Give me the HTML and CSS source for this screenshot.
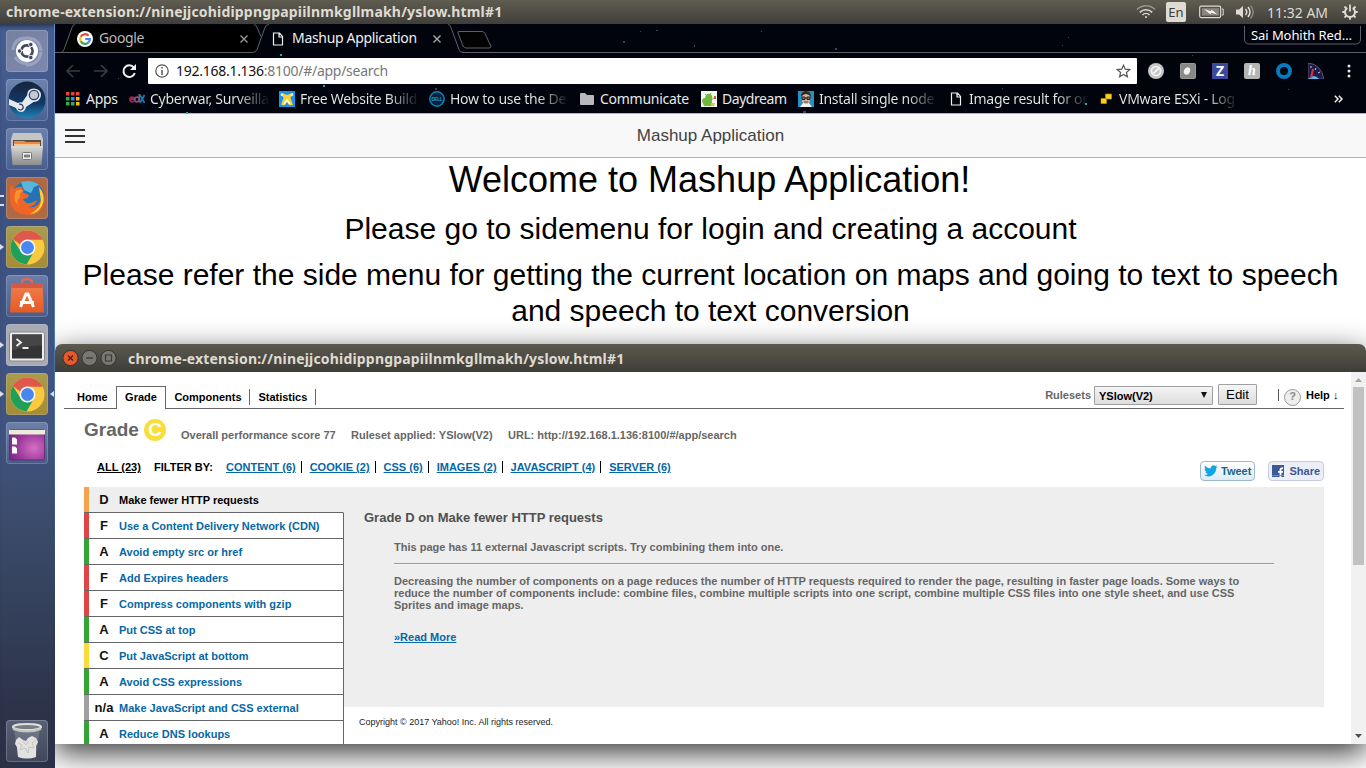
FILE: index.html
```html
<!DOCTYPE html>
<html lang="en">
<head>
<meta charset="utf-8">
<title>Mashup Application</title>
<link rel="stylesheet" href="styles.css">
</head>
<body>
<svg width="0" height="0" class="defs">
  <defs>
    <linearGradient id="steam" x1="0" y1="0" x2="0" y2="1"><stop offset="0" stop-color="#17243d"/><stop offset=".6" stop-color="#123a68"/><stop offset="1" stop-color="#1f86b8"/></linearGradient>
    <linearGradient id="metal" x1="0" y1="0" x2="0" y2="1"><stop offset="0" stop-color="#d8d8d6"/><stop offset="1" stop-color="#8d8d8b"/></linearGradient>
    <linearGradient id="bag" x1="0" y1="0" x2="0" y2="1"><stop offset="0" stop-color="#f0804f"/><stop offset="1" stop-color="#e65a22"/></linearGradient>
    <radialGradient id="purple" cx=".7" cy=".6" r=".8"><stop offset="0" stop-color="#d66fc4"/><stop offset=".6" stop-color="#9b3a9c"/><stop offset="1" stop-color="#74287d"/></radialGradient>
    <symbol id="page" viewBox="0 0 12 14"><path d="M1.5 1h6l3 3.4V13h-9zM7 1v4h3.5" fill="none" stroke="#f2f2f2" stroke-width="1.2"/></symbol>
    <symbol id="chrome" viewBox="0 0 36 36">
      <circle cx="18" cy="18" r="17.5" fill="#fbc93d"/>
      <path d="M2.8 9.3A17.5 17.5 0 0 1 33.6 10H18a8 8 0 0 0-7.4 5z" fill="#e0584b"/>
      <path d="M2.9 9.2A17.5 17.5 0 0 0 17 35.5l7.8-13.4A8 8 0 0 1 11 22z" fill="#1ea05b"/>
      <circle cx="18" cy="18" r="8.2" fill="#f4f4f4"/><circle cx="18" cy="18" r="6.6" fill="#4a86f0"/>
    </symbol>
  </defs>
</svg>

<header class="panel">
  <span class="panel-title ui">chrome-extension://ninejjcohidippngpapiilnmkgllmakh/yslow.html#1</span>
  <div class="indicators">
    <svg class="wifi" width="20" height="14" viewBox="0 0 20 14" fill="none" stroke="#dfdbd2" stroke-width="1.5"><path d="M1 4.6a12.6 12.6 0 0 1 18 0" stroke="#98948c"/><path d="M3.8 7.4a8.8 8.8 0 0 1 12.4 0M6.5 10a5 5 0 0 1 7 0"/><circle cx="10" cy="12" r="1" fill="#dfdbd2" stroke="none"/></svg>
    <span class="lang ui">En</span>
    <svg class="battery" width="25" height="14" viewBox="0 0 25 14"><rect x=".7" y="1.2" width="21" height="11.4" rx="1.5" fill="none" stroke="#dfdbd2" stroke-width="1.2"/><path d="M23 4h1.2v6H23" fill="none" stroke="#dfdbd2"/><path d="M3 3.2h17v7.4H3z" fill="#8a867e"/><path d="M5 4l7 2.200.5-1.800 6 5.200-6.500-1.800-.5 1.800z" fill="#f3f0ea"/></svg>
    <svg class="sound" width="20" height="16" viewBox="0 0 20 16"><path d="M1 5.500h3L8 2v12L4 10.500H1z" fill="#dfdbd2"/><path d="M10.500 5q2.500 3 0 6M13 3q4 5 0 10" fill="none" stroke="#dfdbd2" stroke-width="1.500"/><path d="M15.500 1.500q5.500 6.500 0 13" fill="none" stroke="#8a867e" stroke-width="1.500"/></svg>
    <span class="clock ui">11:32 AM</span>
    <svg width="16" height="16" viewBox="0 0 16 16" fill="none" stroke="#dfdbd2"><path d="M5.300 3.900a5 5 0 1 0 5.400 0" stroke-width="2"/><path d="M8 .5v7" stroke-width="1.800"/><path d="M.3 8h2.500M13.200 8h2.500M8 13v2.700M2.500 2.500l1.800 1.800M13.500 2.500l-1.800 1.800M2.500 13.500l1.800-1.800M13.500 13.500l-1.800-1.800" stroke-width="1.800"/></svg>
  </div>
</header>

<div class="desktop">
  <nav class="launcher">
    <div class="tile dash"><svg width="42" height="42" viewBox="0 0 42 42"><g fill="none" stroke="#b3bbd2" stroke-width="3" opacity=".55"><path d="M7 20Q8 7 22 8q12 1 13 13M35 22q-2 13-15 13"/><path d="M9 27q5 8 14 6"/></g><circle cx="21" cy="21" r="11" fill="#fff"/><circle cx="21" cy="21" r="5.600" fill="none" stroke="#414861" stroke-width="2.600" stroke-dasharray="10.300 1.400" stroke-dashoffset="5"/><g fill="#414861" stroke="#fff" stroke-width=".8"><circle cx="13.500" cy="21" r="2.200"/><circle cx="24.800" cy="14.500" r="2.200"/><circle cx="24.800" cy="27.500" r="2.200"/></g></svg></div>
    <div class="tile"><svg width="42" height="42" viewBox="0 0 42 42"><circle cx="21" cy="21" r="18.500" fill="url(#steam)"/><path d="M3 20l9 4q2-1 4-.5l5-7q0-7 7-7 7 .5 7 7-1 6-7.500 6.500L20 28q-1 5-5 5-4-.5-5-4l-7-3z" fill="#e6e9ee"/><circle cx="28" cy="16" r="4.700" fill="#c3cad5" stroke="#304563" stroke-width="1.300"/><path d="M13 25.200q3-.5 4 2t-2 3.800l-3-1" fill="none" stroke="#304563" stroke-width="1.200"/></svg></div>
    <div class="tile"><svg width="42" height="42" viewBox="0 0 42 42"><path d="M7 5h28l2 6v9H5v-9z" fill="#c5c5c3"/><path d="M7 12h28v8H7z" fill="#55504b"/><path d="M8 13h10l2 1h14v6H8z" fill="#ee8b43"/><path d="M8 16h26v2H8z" fill="#f6c491"/><path d="M5 18h32l-1.500 19h-29z" fill="url(#metal)"/><rect x="16.500" y="24.500" width="9" height="7" rx="1" fill="#eee" stroke="#777"/><path d="M18.500 27h5v2h-5z" fill="#999" stroke="#555" stroke-width=".7"/></svg></div>
    <div class="tile orange open2"><svg width="42" height="42" viewBox="0 0 42 42"><circle cx="22" cy="20" r="16" fill="#2473b5"/><path d="M15 5q11-3 18 3l-5 2-3 6-7-3z" fill="#58b7df"/><path d="M5 8q2 2 3 4 5-4 9-1-2 3 1 5l5 2q-1 4-6 4 2 5 8 4l6-3q-2 7-9 7 10 2 13-8 1-7-2-11 7 6 5 15-3 12-16 12Q5 37 4 22 3 14 5 8z" fill="#ef6526"/><path d="M33 10q6 7 4 16-3 10-13 11 10-5 11-13z" fill="#fbd33a"/><path d="M10 14q5-3 8 0-5 1-4 6-4 3-2 8-6-5-2-14z" fill="#f89233"/></svg></div>
    <div class="tile gold open"><svg width="35" height="35"><use href="#chrome"/></svg></div>
    <div class="tile"><svg width="42" height="42" viewBox="0 0 42 42"><path d="M16 10V7q0-3 5-3t5 3v3" fill="none" stroke="#d66b58" stroke-width="2.500"/><path d="M5.500 8h31l1.500 29.500H4z" fill="url(#bag)"/><path d="M5.500 8h31v5h-31z" fill="#d65742"/><g fill="none" stroke="#fff" stroke-width="3"><path d="M14.500 32l5.500-13h2l5.500 13M14 27.500h14"/></g></svg></div>
    <div class="tile grey open"><svg width="42" height="42" viewBox="0 0 42 42"><rect x="3.500" y="8" width="35" height="29" rx="2" fill="#eee" stroke="#888"/><rect x="6" y="10.500" width="30" height="24" fill="#343434"/><path d="M6 10.500h30v11q-14 0-30 5z" fill="#464646"/><path d="M10.500 15l4.500 3.500-4.500 3.500M16.500 24h6" fill="none" stroke="#eee" stroke-width="1.800"/></svg></div>
    <div class="tile gold open active"><svg width="35" height="35"><use href="#chrome"/></svg></div>
    <div class="tile"><svg width="42" height="42" viewBox="0 0 42 42"><rect x="3.500" y="8" width="35" height="30" rx="1.500" fill="url(#purple)" stroke="#5a2462" stroke-width=".7"/><path d="M3 8h36v4.500H3z" fill="#eeeadb"/><path d="M6 15.500h3l2 2v5H6zM6 24.500h3l2 2v5H6z" fill="#fff"/></svg></div>
    <div class="tile trash"><svg width="42" height="42" viewBox="0 0 42 42"><path d="M8 8l4 29q9 3 18 0l4-29z" fill="#a9afb8" opacity=".3"/><path d="M10 20l3-3 4 3 3 1 2-3 4-2 4 2 2 4-2 4 0 11q-9 3-18 0l-1-10-2-3z" fill="#e2e3e1"/><path d="M12 23l4 2-2 5 5-2 3 5 1-6 5 1-2-5 4-3M17 21l3 4 3-4" fill="none" stroke="#c2c4c1"/><ellipse cx="21" cy="7" rx="14" ry="3" fill="#777d85" stroke="#dfe0dc" stroke-width="2"/><path d="M7 9q14 5 28 0" fill="none" stroke="#c2c4c0" stroke-width="2"/></svg></div>
  </nav>

  <main class="browser">
    <section class="chrome-top">
      <svg class="sky" width="1311" height="90" viewBox="55 24 1311 90">
        <path d="M62 52l11-27h180l5 12-4 15z" fill="#000"/>
        <g fill="none" stroke="#5d6065"><path d="M55 52.500h6q2 0 3-3l8-22q1-3 3-3M254 24.500q2 0 3 3l4 9M55 52.500h197q4 0 5-3l8-22q1-3 4-3M448 24.500q2 0 3 3l8 22q1 3 4 3h903"/><path d="M459 31.500h23q2 0 3 2l6 13q0 1.500-2 1.500h-23q-2 0-3-2l-5-13q-.5-1.500 1-1.500z" fill="#030303"/><path d="M1244.500 26v13q0 5 5 5h106q5 0 5-5V26"/></g>
        <g fill="#56838c"><path d="M280 54h2v2h-2zM323 85h2v2h-2zM186 112h2v2h-2zM1085 103h2v2h-2z" fill="#2ba6ac"/><path d="M623 41h2v2h-2zM694 45h1v2h-1zM835 48h2v2h-2zM640 31h1v1h-1zM656 30h2v1h-2zM761 31h1v1h-1zM253 71h1v1h-1zM435 88h2v2h-2zM803 111h3v2h-3zM1068 37h1v1h-1zM1062 45h1v1h-1zM1288 89h1v1h-1zM118 78h1v1h-1zM1192 55h1v1h-1zM1002 88h1v1h-1z" opacity=".55"/></g>
      </svg>
      <div class="tabs ui">
        <div class="tab tab-a">
          <svg width="16" height="16" viewBox="0 0 16 16"><circle cx="8" cy="8" r="8" fill="#fff"/><g fill="none" stroke-width="2.200"><path d="M11.600 4.700A4.900 4.900 0 0 0 3.700 5.800" stroke="#ea4335"/><path d="M3.700 5.800a4.900 4.900 0 0 0 0 4.500" stroke="#fbbc05"/><path d="M3.700 10.300a4.900 4.900 0 0 0 7.800 1.200" stroke="#34a853"/><path d="M8.200 8h4.700q0 2-1.400 3.500" stroke="#4285f4"/></g></svg>
          <span class="tab-name t-google">Google</span>
          <svg class="close" width="8" height="8" viewBox="0 0 8 8"><path d="M.5.5l7 7M7.500.5l-7 7" stroke="#96979a" stroke-width="1.400"/></svg>
        </div>
        <div class="tab tab-b">
          <svg width="12" height="14"><use href="#page"/></svg>
          <span class="tab-name t-mashup">Mashup Application</span>
          <svg class="close" width="8" height="8" viewBox="0 0 8 8"><path d="M.5.5l7 7M7.500.5l-7 7" stroke="#aaa" stroke-width="1.400"/></svg>
        </div>
        <span class="profile">Sai Mohith Red…</span>
      </div>
      <div class="toolbar">
        <svg class="nav-icons" width="86" height="26" viewBox="0 0 86 26" fill="none"><g stroke="#393b41" stroke-width="1.700"><path d="M18 13H5.500M11 7l-6 6 6 6M32 13h12.500M39 7l6 6-6 6"/></g><path d="M71.800 9.500A5.800 5.800 0 1 0 72.800 15" stroke="#f2f2f2" stroke-width="2"/><path d="M74 6v6h-6z" fill="#f2f2f2"/></svg>
        <div class="omnibox ui">
          <svg width="14" height="14" viewBox="0 0 14 14"><circle cx="7" cy="7" r="6.200" fill="none" stroke="#555" stroke-width="1.200"/><path d="M7 6v5M7 3v1.600" stroke="#555" stroke-width="1.500"/></svg>
          <span class="url">192.168.1.136<i>:8100/#/app/search</i></span>
          <svg class="star" width="15" height="14" viewBox="0 0 15 14"><path d="M7.500 1.200l1.800 4 4.400.4-3.300 2.900 1 4.300-3.900-2.300-3.900 2.300 1-4.300L1.300 5.600l4.400-.4z" fill="none" stroke="#555" stroke-width="1.200"/></svg>
        </div>
        <div class="extensions">
          <svg width="16" height="16"><circle cx="8" cy="8" r="8" fill="#c6c6c6"/><circle cx="8" cy="8" r="4.500" fill="none" stroke="#f5f5f5" stroke-width="1.600"/><path d="M5.500 10.500l5-5" stroke="#fff" stroke-width="1.600"/></svg>
          <svg width="16" height="16"><rect width="16" height="16" rx="2" fill="#9a9a9a"/><path d="M1 1h14v14H1z" fill="#888"/><ellipse cx="7" cy="8" rx="3" ry="3.800" fill="#f2f2f2" transform="rotate(25 7 8)"/></svg>
          <span class="ext-z">Z</span>
          <span class="ext-h">h</span>
          <svg width="16" height="16"><circle cx="8" cy="8" r="6" fill="#02060d" stroke="#087bc0" stroke-width="4"/></svg>
          <svg width="16" height="16" viewBox="0 0 16 16"><path d="M0 0q13 1 16 16H0z" fill="#1d1b4c" stroke="#777" stroke-width=".7"/><path d="M0 16q6-6 11 0z" fill="#5ab6ec"/><path d="M3 15L5 6" stroke="#ee2d3a" stroke-width="2"/><path d="M3 3v2M8 5L7 7M12 9l-2 1" stroke="#ccc"/></svg>
          <svg width="4" height="14" fill="#e5e5e5"><circle cx="2" cy="2" r="1.500"/><circle cx="2" cy="7" r="1.500"/><circle cx="2" cy="12" r="1.500"/></svg>
        </div>
      </div>
      <div class="bookmarks ui">
        <div class="bm w64"><svg width="16" height="16"><g fill="#ea4335"><path d="M1 1h3.500v3.500H1zM6 1h3.500v3.500H6zM11 1h3.500v3.500H11z"/></g><path d="M1 6h3.500v3.500H1zM1 11h3.500v3.500H1zM6 11h3.500v3.500H6z" fill="#34a853"/><path d="M6 6h3.500v3.500H6z" fill="#4285f4"/><path d="M11 6h3.500v3.500H11zM11 11h3.500v3.500H11z" fill="#fbbc05"/></svg><span>Apps</span></div>
        <div class="bm fade"><svg width="16" height="16" fill="none" stroke-width="1.800"><path d="M1 8h4.500A2.300 2.300 0 1 0 5 10" stroke="#a81f58"/><circle cx="8" cy="8.500" r="2.300" stroke="#8d4a77"/><path d="M10.300 3v8" stroke="#7d5a72"/><path d="M11 4l4.500 8M15.500 4L11 12" stroke="#1479b5"/></svg><span>Cyberwar, Surveilla</span></div>
        <div class="bm fade"><svg width="16" height="16"><path d="M0 0h16v16H0z" fill="#1593f5"/><path d="M2 3l5 3M14 3L9 6M4 14l4-6 4 6" stroke="#fff" stroke-width="2.200" fill="none"/><path d="M3 2l5 2 5-2-1.500 5L14 14H10l-2-3-2 3H2l2.500-7z" fill="#fdd12b"/><path d="M5 13l3-4 3 4" stroke="#fff" stroke-width="1.500" fill="none"/></svg><span>Free Website Build</span></div>
        <div class="bm fade"><svg width="16" height="16"><circle cx="8" cy="8" r="7.200" fill="#06203c" stroke="#0d83bb" stroke-width="1.500"/><text x="2.600" y="10.300" font-family="Liberation Sans" font-weight="bold" font-size="5" fill="#1793cd" textLength="11">DELL</text></svg><span>How to use the De</span></div>
        <div class="bm w122"><svg width="16" height="16"><path d="M1 3q0-1 1-1h4l2 2h6q1 0 1 1v8q0 1-1 1H2q-1 0-1-1z" fill="#b9b9bb"/></svg><span>Communicate</span></div>
        <div class="bm w97"><svg width="16" height="16"><path d="M0 0h16v16H0z" fill="#f4f7ee"/><path d="M3 15L1 10q0-3 3-3 1-5 5-4 3 1 2 5v7z" fill="#6fb93c"/><path d="M4 3l2 2M10 2L9 4M10 9l3-2" stroke="#6fb93c"/><path d="M10 12h4l-1 3h-3z" fill="#efbd35"/><path d="M13 5h2v3h-2z" fill="#d5533e"/></svg><span class="dream">Daydream</span></div>
        <div class="bm fade"><svg width="16" height="16"><path d="M0 0h16v16H0z" fill="#2492c4"/><path d="M2 16l3-4h6l3 4z" fill="#f3f3f3"/><ellipse cx="8" cy="7.500" rx="4.300" ry="5.500" fill="#e0b095"/><path d="M3 6q0-6 5-6t5 6q-2-3-5-3T3 6z" fill="#33251f"/><path d="M4 6h3v2.500H4zM9 6h3v2.500H9zM7 7h2" fill="#777" stroke="#222"/><path d="M6 11h4" stroke="#703d2c"/></svg><span>Install single node</span></div>
        <div class="bm fade"><svg width="16" height="14"><use href="#page" x="2" width="12" height="14"/></svg><span>Image result for or</span></div>
        <div class="bm fade"><svg width="16" height="16"><path d="M7.500 3h6v5h-6zM3 7.500h5.500v5H3z" fill="#f7d21c" stroke="#ba8e16" stroke-width=".6"/></svg><span>VMware ESXi - Log</span></div>
        <svg class="more" width="9" height="8" viewBox="0 0 9 8"><path d="M.8.800L4 4 .800 7.200M4.800.800L8 4 4.800 7.200" fill="none" stroke="#eee" stroke-width="1.500"/></svg>
      </div>
    </section>

    <section class="app">
      <div class="app-bar"><span class="burger"></span><span class="app-name">Mashup Application</span></div>
      <h1>Welcome to Mashup Application!</h1>
      <h2>Please go to sidemenu for login and creating a account</h2>
      <h2>Please refer the side menu for getting the current location on maps and going to text to speech and speech to text conversion</h2>
    </section>
  </main>

  <div class="window">
    <div class="titlebar">
      <svg width="56" height="18" viewBox="0 0 56 18"><circle cx="9.500" cy="9" r="7.600" fill="#e9572b" stroke="#35332f"/><path d="M7 6.500l5 5M12 6.500l-5 5" stroke="#512214" stroke-width="1.300"/><circle cx="28.500" cy="9" r="7.600" fill="#787770" stroke="#35332f"/><path d="M25 9h7" stroke="#3c3b37" stroke-width="1.300"/><circle cx="47.500" cy="9" r="7.600" fill="#787770" stroke="#35332f"/><path d="M44.500 6h6v6h-6z" fill="none" stroke="#3c3b37" stroke-width="1.200"/></svg>
      <span class="window-title ui">chrome-extension://ninejjcohidippngpapiilnmkgllmakh/yslow.html#1</span>
    </div>
    <div class="window-body">
      <div class="yslow">
        <div class="menu">
          <ul class="menu-tabs"><li class="home">Home</li><li class="current">Grade</li><li class="comp">Components</li><li class="stat">Statistics</li></ul>
          <div class="menu-right">
            <span class="rs-label">Rulesets</span>
            <span class="select">YSlow(V2)<b></b></span>
            <span class="edit">Edit</span>
            <span class="bar"></span>
            <span class="qmark">?</span>
            <span class="help">Help ↓</span>
          </div>
        </div>
        <div class="summary"><span class="grade-word">Grade</span><span class="grade-dot">C</span><span class="s-item a">Overall performance score 77</span><span class="s-item b">Ruleset applied: YSlow(V2)</span><span class="s-item">URL: http://192.168.1.136:8100/#/app/search</span></div>
        <div class="filters">
          <a class="all">ALL (23)</a><span class="by">FILTER BY:</span><a>CONTENT (6)</a><i></i><a>COOKIE (2)</a><i></i><a>CSS (6)</a><i></i><a>IMAGES (2)</a><i></i><a>JAVASCRIPT (4)</a><i></i><a>SERVER (6)</a>
          <div class="social">
            <span class="btn tweet"><svg width="14" height="12" viewBox="0 0 14 12"><path d="M0 10q2.500.2 4-1-2-.3-2.600-2h1.200Q.5 6 .5 4l1.200.3Q.2 2.600 1 .8 3.500 3.500 6.700 3.600 6.400.6 9.200.2q1.300 0 2 .8L13.200.3l-1.300 1.600L13.700 1.500l-1.400 1.500Q12.200 8 8 10.500 4 12.500 0 10z" fill="#13a4e4"/></svg>Tweet</span>
            <span class="btn share"><svg width="12" height="12"><path d="M0 0h12v12H0z" fill="#3b5998"/><path d="M8.500 12V6.500M6 6.800h5M8.500 7V4.500Q8.600 3 11 3.300" fill="none" stroke="#fff" stroke-width="1.800"/><path d="M0 10.500h12" stroke="#7287b6"/></svg>Share</span>
          </div>
        </div>
        <div class="report">
          <ul class="rules">
            <li class="d on"><b>D</b>Make fewer HTTP requests</li>
            <li class="f"><b>F</b>Use a Content Delivery Network (CDN)</li>
            <li class="g"><b>A</b>Avoid empty src or href</li>
            <li class="f"><b>F</b>Add Expires headers</li>
            <li class="f"><b>F</b>Compress components with gzip</li>
            <li class="g"><b>A</b>Put CSS at top</li>
            <li class="c"><b>C</b>Put JavaScript at bottom</li>
            <li class="g"><b>A</b>Avoid CSS expressions</li>
            <li class="na"><b>n/a</b>Make JavaScript and CSS external</li>
            <li class="g"><b>A</b>Reduce DNS lookups</li>
          </ul>
          <div class="right">
            <article>
              <h4>Grade D on Make fewer HTTP requests</h4>
              <div class="detail">
                <p>This page has 11 external Javascript scripts. Try combining them into one.</p>
                <hr>
                <p>Decreasing the number of components on a page reduces the number of HTTP requests required to render the page, resulting in faster page loads. Some ways to reduce the number of components include: combine files, combine multiple scripts into one script, combine multiple CSS files into one style sheet, and use CSS Sprites and image maps.</p>
                <a>»Read More</a>
              </div>
            </article>
            <div class="copyright">Copyright © 2017 Yahoo! Inc. All rights reserved.</div>
          </div>
        </div>
      </div>
      <div class="scrollbar"><svg width="15" height="15"><path d="M4 10l3.500-4L11 10z" fill="#a3a3a3"/></svg><span class="thumb"></span><svg width="15" height="15"><path d="M4 5l3.500 4L11 5z" fill="#505050"/></svg></div>
    </div>
  </div>
</div>
</body>
</html>
```
FILE: styles.css
```css
* { box-sizing: border-box; }
body { margin: 0; width: 1366px; height: 768px; overflow: hidden; display: flex; flex-direction: column; font-family: "Liberation Sans", Arial, sans-serif; background: #fff; }
ul, h1, h2, h4, p { margin: 0; padding: 0; }
ul { list-style: none; }
svg { display: block; flex: none; }
.defs { position: absolute; }
.ui { font-family: "Noto Sans", "Open Sans", sans-serif; white-space: nowrap; }

/* top panel */
.panel { height: 24px; flex: none; display: flex; align-items: center; justify-content: space-between; padding: 0 8px 0 6px; background: linear-gradient(#5f5c50, #3f3e3a); color: #dfdbd2; }
.panel-title, .window-title { font-weight: bold; font-size: 14px; letter-spacing: .18px; color: #dfdbd2; }
.panel-title { position: relative; top: -1px; }
.indicators { display: flex; align-items: center; }
.wifi { margin-right: -1px; }
.lang { width: 20px; height: 20px; margin-left: 11px; border-radius: 2px; background: #dfdbd2; color: #3c3b37; font-size: 13px; line-height: 20px; text-align: center; }
.battery { margin-left: 13px; }
.sound { margin-left: 11px; }
.clock { width: 64px; margin: 0 11px 0 12px; font-size: 14px; letter-spacing: 0; }

.desktop { position: relative; flex: 1; display: flex; min-height: 0; }

/* launcher */
.launcher { position: relative; z-index: 3; width: 55px; flex: none; display: flex; flex-direction: column; gap: 7px; padding: 6px 0 6px 6px; background: linear-gradient(#465f92, #3d5283 22%, #41547f 55%, #384764 72%, #2c3349 92%, #2b3146); box-shadow: inset 0 5px 5px -3px #26304c; }
.launcher::after { content: ""; position: absolute; right: 0; top: 0; width: 1px; height: 100%; background: linear-gradient(#5d8ed0, #4d74ae 50%, #2c3349 85%); }
.tile { position: relative; width: 42px; height: 42px; flex: none; border-radius: 4px; display: flex; align-items: center; justify-content: center; background: linear-gradient(rgba(160,180,215,.45), rgba(100,125,175,.25)); box-shadow: inset 0 0 0 1px rgba(190,205,235,.28); }
.dash { background: linear-gradient(135deg, #76809f, #7c88ae); }
.orange { background: #af6a43; }
.gold { background: linear-gradient(#a99b4e, #a58c37); }
.grey { background: #a9abb2; }
.trash { margin-top: auto; background: linear-gradient(#5b6174, #40475b); }
.open::before, .open2::before { content: ""; position: absolute; left: -6px; top: 18px; border: 3px solid transparent; border-left: 4px solid #dcdfe5; }
.open2::before { border: 0; width: 4px; height: 7px; border-top: 2px solid #dcdfe5; border-bottom: 2px solid #dcdfe5; }
.active::after { content: ""; position: absolute; right: -6px; top: 18px; border: 3px solid transparent; border-right: 4px solid #dcdfe5; }

/* browser */
.browser { flex: 1; display: flex; flex-direction: column; min-width: 0; }
.chrome-top { position: relative; height: 90px; flex: none; display: flex; flex-direction: column; background: #01040c; border-bottom: 1px solid #b8b4bc; color: #e8e8e8; }
.sky { position: absolute; left: 0; top: 0; }
.tabs { position: relative; height: 29px; display: flex; font-size: 14px; }
.tab { display: flex; align-items: center; height: 29px; }
.tab-a { width: 195px; padding-left: 22px; color: #b8babd; }
.tab-b { width: 191px; padding-left: 22px; color: #f0f0f0; }
.tab-name { margin: -2px 0 0 6px; }
.tab-b .tab-name { margin-left: 8px; }
.close { margin-left: auto; }
.tab-a .close { margin-right: 2px; }
.t-google { letter-spacing: -.35px; }
.t-mashup { letter-spacing: -.32px; }
.profile { margin: 3px 0 0 auto; width: 115px; line-height: 17px; font-size: 13px; letter-spacing: -.07px; color: #fff; }
.toolbar { position: relative; display: flex; height: 26px; margin-top: 5px; }
.nav-icons { margin: 0 0 0 7px; }
.omnibox { width: 989px; height: 26px; display: flex; align-items: center; padding: 0 6px 0 7px; background: #fff; border-radius: 1px; color: #111; font-size: 14px; }
.url { margin: -1px 0 0 7px; letter-spacing: -.27px; }
.url i { font-style: normal; color: #777; }
.star { margin-left: auto; }
.extensions { display: flex; align-items: center; gap: 16px; margin-left: 11px; }
.extensions svg:last-child { margin-left: 7px; }
.ext-z { width: 16px; height: 16px; background: #3d4a9c; color: #fff; font: bold 14px/16px "Open Sans", sans-serif; text-align: center; }
.ext-h { width: 16px; height: 16px; background: #b5b5b5; color: #fff; font: italic bold 14px/15px "Liberation Serif", serif; text-align: center; border-radius: 2px; }
.bookmarks { position: relative; display: flex; align-items: center; height: 30px; padding-left: 10px; font-size: 14px; letter-spacing: -.27px; }
.bm { width: 150px; display: flex; align-items: center; gap: 5px; }
.fade span { color: transparent; background: linear-gradient(90deg, #e8e8e8 88px, rgba(232,232,232,.08) 117px); -webkit-background-clip: text; background-clip: text; }
.w64 { width: 64px; }
.w122 { width: 122px; }
.w97 { width: 97px; }
.dream { letter-spacing: -.45px; }
.more { margin: 0 23px 0 auto; }

.app { display: flex; flex-direction: column; color: #000; }
.app-bar { position: relative; height: 44px; background: #f8f8f8; border-bottom: 1px solid #b2b2b2; display: flex; align-items: center; justify-content: center; }
.app-name { font-size: 17px; color: #424242; }
.burger { position: absolute; left: 10px; top: 15px; width: 20px; height: 14px; border: solid #333; border-width: 2px 0; }
.burger::after { content: ""; display: block; height: 2px; margin-top: 4px; background: #333; }
.app h1 { margin-top: 1px; padding-right: 2px; font-size: 36px; font-weight: normal; line-height: 42px; text-align: center; }
.app h2 { margin-top: 10px; padding: 0 16px; font-size: 30px; font-weight: normal; line-height: 36px; text-align: center; }

/* floating window */
.window { position: absolute; z-index: 2; left: 55px; top: 320px; width: 1311px; height: 400px; display: flex; flex-direction: column; border-radius: 7px 7px 0 0; box-shadow: 0 9px 30px rgba(0,0,0,.78); background: #fff; }
.titlebar { height: 28px; flex: none; display: flex; align-items: center; padding-left: 6px; border-radius: 7px 7px 0 0; background: linear-gradient(#5c5a4e, #3d3c38); }
.window-title { margin-left: 11px; }
.window-body { flex: 1; display: flex; min-height: 0; font-size: 11px; font-weight: bold; line-height: 13px; }
.yslow { flex: 1; display: flex; flex-direction: column; overflow: hidden; padding: 0 7px 0 9px; }
.menu { height: 37px; flex: none; display: flex; justify-content: space-between; border-bottom: 1px solid #666; }
.menu-tabs { display: flex; padding-top: 14px; }
.menu-tabs li { height: 23px; line-height: 22px; white-space: nowrap; }
.home { width: 52px; padding-left: 13px; }
.menu-tabs .current { width: 50px; text-align: center; border: 1px solid #666; border-bottom: 0; background: #fff; line-height: 20px; }
.comp, .stat { padding-left: 8.4px; position: relative; }
.comp { width: 84px; }
.stat { width: 66px; }
.comp::after, .stat::after { content: ""; position: absolute; right: 0; top: 3px; height: 16px; width: 1px; background: #666; }
.menu-right { display: flex; align-items: flex-start; }
.rs-label { margin-top: 17px; color: #666; }
.select { display: flex; justify-content: space-between; align-items: center; width: 119px; height: 19px; margin: 14px 0 0 3px; padding: 1px 6px 0 4px; border: 1px solid #a0a0a0; border-radius: 1px; background: linear-gradient(#f4f4f4, #ddd); }
.select b { border: 3.5px solid transparent; border-top: 6px solid #111; border-bottom: 0; margin-top: -3px; width: 0; margin-right: -1px; }
.edit { width: 39px; height: 21px; margin: 12px 0 0 5px; border: 1px solid #a0a0a0; border-radius: 1px; background: linear-gradient(#f6f6f6, #dcdcdc); font: 13.333px/19px "Liberation Sans", sans-serif; text-align: center; }
.bar { width: 1px; height: 12px; margin: 17px 0 0 21px; background: #555; }
.qmark { width: 17px; height: 17px; margin: 17px 0 0 5px; border: 1px solid #999; border-radius: 50%; background: #eee; color: #888; line-height: 13px; text-align: center; }
.help { margin: 17px 0 0 5px; width: 38px; white-space: nowrap; }
.summary { height: 36px; flex: none; display: flex; align-items: flex-start; padding: 10px 0 0 20px; color: #666; white-space: nowrap; }
.grade-word { font-size: 19px; line-height: 22px; width: 60px; }
.grade-dot { width: 22px; height: 22px; border-radius: 50%; background: #fbdd3a; color: #fff; font-size: 19px; line-height: 22px; text-align: center; margin-right: 15px; }
.s-item { margin-top: 10px; }
.s-item.a { width: 170px; }
.s-item.b { width: 157px; }
.filters { height: 42px; flex: none; display: flex; align-items: flex-start; padding: 16px 20px 0 33px; white-space: nowrap; }
.filters a { color: #0667a6; text-decoration: underline; text-underline-offset: 1px; }
.filters .all { color: #000; width: 57px; }
.by { width: 72px; }
.filters i { width: 1px; height: 12px; background: #000; margin: 0 8px 0 5px; }
.social { margin-left: auto; display: flex; gap: 13px; }
.btn { display: flex; align-items: center; height: 20px; border: 1px solid #9db9cc; border-radius: 4px; }
.tweet { width: 55px; gap: 3px; padding-left: 3px; background: linear-gradient(#fff, #dcebf6); color: #186487; }
.share { width: 56px; gap: 5.500px; padding-left: 3px; border-color: #c4cde2; background: #eceef5; color: #3b5998; }
.report { display: flex; padding: 0 20px; }
.rules { width: 260px; flex: none; }
.rules li { display: flex; height: 26px; line-height: 27px; border-bottom: 1px solid #666; border-right: 1px solid #666; color: #0667a6; white-space: nowrap; }
.rules li::before { content: ""; width: 5px; height: 25px; background: #a0a0a0; }
.rules b { width: 30px; font-size: 13px; line-height: 25px; text-align: center; color: #111; }
.rules .on { background: #eee; color: #000; border-right-color: #eee; }
.rules .d::before { background: #f7a34a; }
.rules .f::before { background: #e04545; }
.rules .g::before { background: #33a532; }
.rules .c::before { background: #f8dd38; }
.right { flex: 1; }
article { height: 220px; background: #eee; padding: 23px 50px 0 20px; color: #666; }
article h4 { font-size: 13px; line-height: 15px; color: #505050; }
.detail { margin: 16px 0 0 30px; line-height: 12px; }
.detail hr { margin: 10px 0 10px; border: 0; height: 2px; border-top: 1px solid #999; border-bottom: 1px solid #f4f4f4; }
.detail p { padding-right: 30px; }
.detail a { display: inline-block; margin-top: 20px; color: #0667a6; text-decoration: underline; text-underline-offset: 1px; }
.copyright { margin: 10px 0 0 15px; font-size: 9px; font-weight: normal; line-height: 11px; color: #222; }
.scrollbar { width: 15px; flex: none; display: flex; flex-direction: column; background: #f1f1f1; }
.thumb { width: 11px; height: 178px; margin: 0 0 auto 2px; background: #c1c1c1; }
```
